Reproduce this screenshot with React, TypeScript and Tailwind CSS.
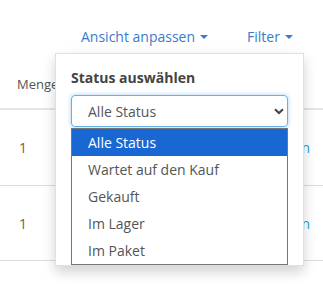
import React from "react";

const Caret = () => (
  <span className="ml-[5px] inline-block w-0 h-0 border-l-[4px] border-r-[4px] border-t-[4px] border-l-transparent border-r-transparent border-t-[#3a7bc8] align-middle" />
);

export default function App() {
  const options = ["Alle Status", "Wartet auf den Kauf", "Gekauft", "Im Lager", "Im Paket"];
  return (
    <div
      className="relative w-[323px] h-[292px] bg-white overflow-hidden text-[14px] text-[#555]"
      style={{ fontFamily: '"Open Sans", "Noto Sans", sans-serif' }}
    >
      {/* top links */}
      <div className="flex items-start h-[74px] pt-[27px] pl-[81px] leading-[20px] text-[#3a7bc8]">
        <span className="flex items-center h-[20px]">Ansicht anpassen<Caret /></span>
        <span className="ml-[39px] flex items-center h-[20px]">Filter<Caret /></span>
      </div>
      {/* table */}
      <div className="h-[34px] pl-[17px] leading-[20px] text-[13px] text-[#555]">Menge</div>
      <div className="border-t-2 border-[#e6e6e6]" />
      <div className="flex items-center justify-between h-[76px] border-b border-[#ddd] pl-[19px] pr-[13px]">
        <span className="text-[#8a5a3c]">1</span>
        <span className="text-[#2a9fd6]">Bearbeiten</span>
      </div>
      <div className="flex items-center justify-between h-[75px] border-b border-[#ddd] pl-[19px] pr-[13px]">
        <span className="text-[#8a5a3c]">1</span>
        <span className="text-[#2a9fd6]">Bearbeiten</span>
      </div>

      {/* dropdown panel */}
      <div className="absolute left-[55px] top-[53px] w-[249px] h-[213px] bg-white border border-[rgba(0,0,0,0.12)] shadow-[0_6px_12px_rgba(0,0,0,0.18)] pl-[15px] pt-[14px]">
        <div className="font-bold text-[14px] leading-[20px] text-[#444]">Status auswählen</div>
        <div className="mt-[7px] w-[217px] h-[32px] flex items-center justify-between border border-[#66afe9] rounded-[4px] shadow-[0_0_4px_rgba(102,175,233,0.6)] pl-[16px] pr-[2px] text-[#555]">
          <span>Alle Status</span>
          <svg width="12" height="12" viewBox="0 0 12 12">
            <path d="M2 4.2 L6 8 L10 4.2" fill="none" stroke="#444" strokeWidth="2" />
          </svg>
        </div>
        <div className="mt-[1px] w-[217px] border border-[#767676] bg-white">
          {options.map((o, i) => (
            <div
              key={o}
              className={
                "h-[27px] flex items-center pl-[16px] " +
                (i === 0 ? "bg-[#1967d2] text-white" : "text-[#555]")
              }
            >
              {o}
            </div>
          ))}
        </div>
      </div>
    </div>
  );
}
